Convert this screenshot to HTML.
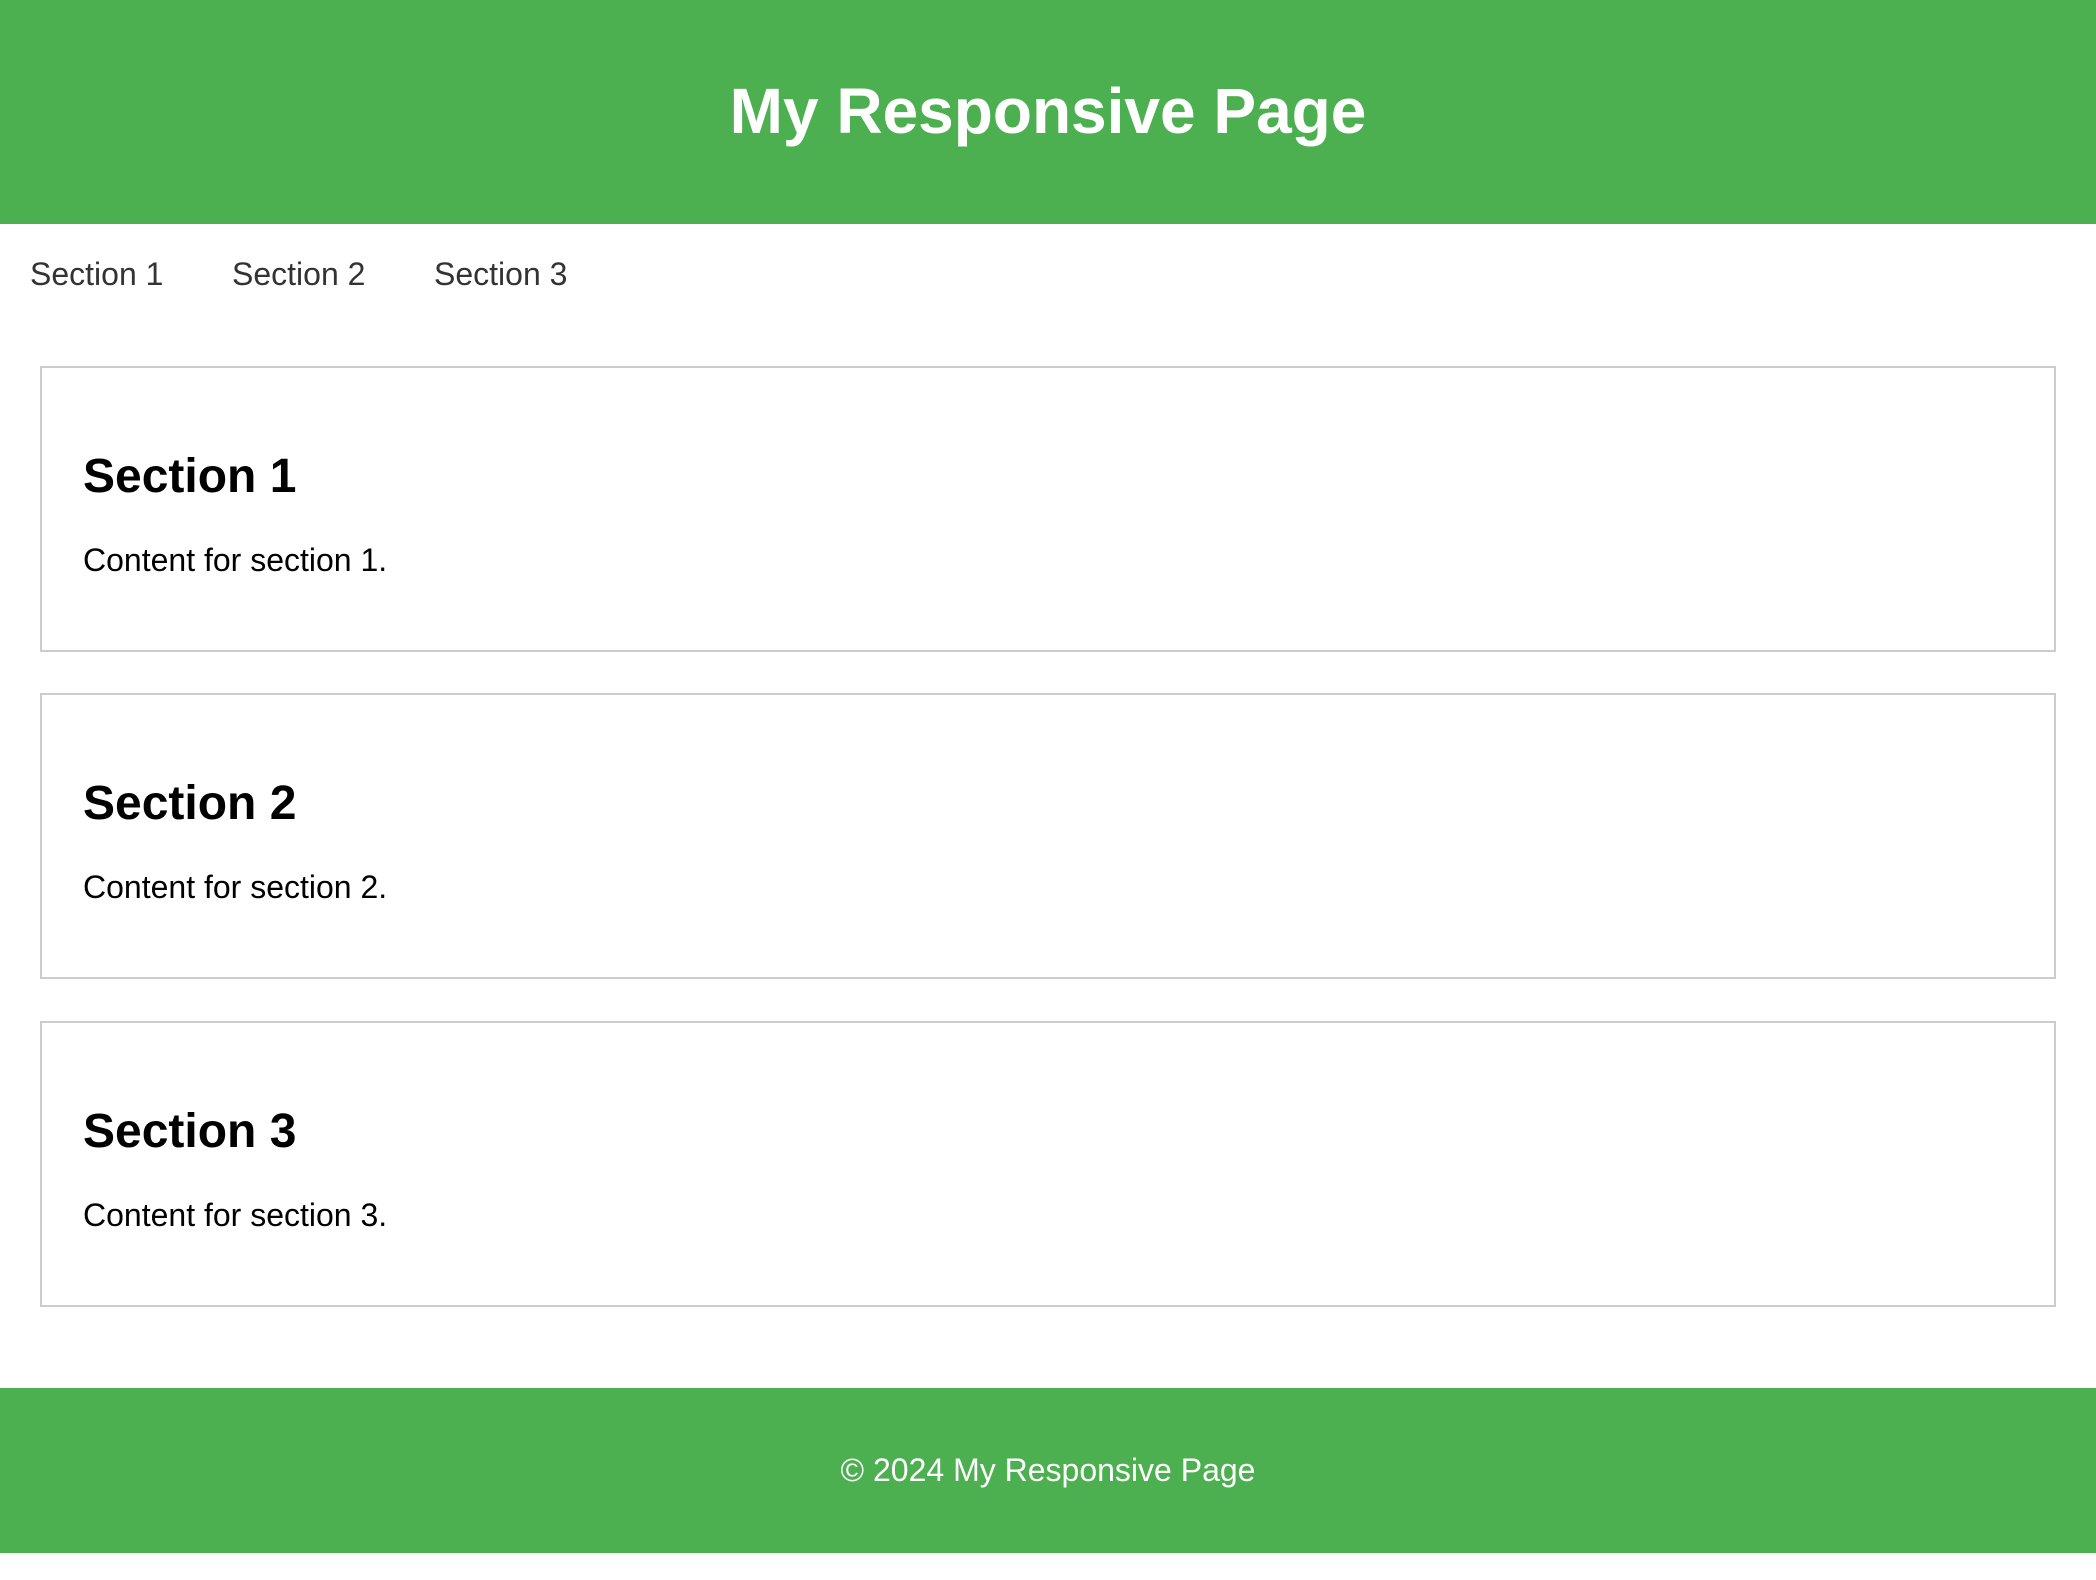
<!DOCTYPE html>
<html><head><meta charset="utf-8"><style>
html,body{margin:0;padding:0;width:2096px;height:1580px;background:#fff;overflow:hidden;font-family:"Liberation Sans",Arial,sans-serif;position:relative}
.a{position:absolute;white-space:nowrap;line-height:1}
.hdr{position:absolute;left:0;top:0;width:2096px;height:224px;background:#4CAF50}
.ftr{position:absolute;left:0;top:1388px;width:2096px;height:165px;background:#4CAF50}
.box{position:absolute;left:40px;width:2012px;height:282px;border:2px solid #ccc}
.h{font-size:48px;font-weight:bold;color:#000;left:83px}
.p{font-size:32px;color:#000;left:83px}
.nav{font-size:32px;color:#333;top:258px}
</style></head><body>
<div class="hdr"></div>
<div class="a" style="left:0;width:2096px;text-align:center;top:79px;font-size:64px;font-weight:bold;color:#fff">My Responsive Page</div>
<div class="a nav" style="left:30px">Section 1</div>
<div class="a nav" style="left:232px">Section 2</div>
<div class="a nav" style="left:434px">Section 3</div>

<div class="box" style="top:366px"></div>
<div class="a h" style="top:453px">Section 1</div>
<div class="a p" style="top:544px">Content for section 1.</div>

<div class="box" style="top:693px"></div>
<div class="a h" style="top:780px">Section 2</div>
<div class="a p" style="top:871px">Content for section 2.</div>

<div class="box" style="top:1021px"></div>
<div class="a h" style="top:1108px">Section 3</div>
<div class="a p" style="top:1199px">Content for section 3.</div>

<div class="ftr"></div>
<div class="a" style="left:0;width:2096px;text-align:center;top:1454px;font-size:32px;color:#fff">© 2024 My Responsive Page</div>
</body></html>
